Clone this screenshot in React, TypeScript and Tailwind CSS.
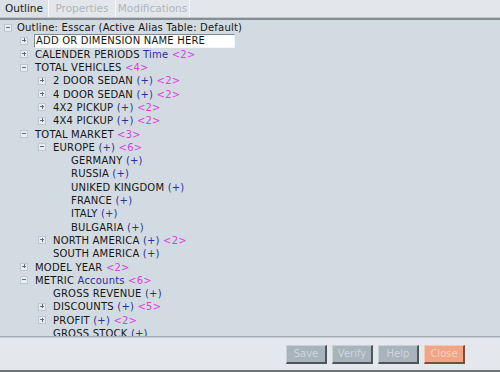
import React from "react";

type Row = {
  level: number;
  exp?: "+" | "-";
  label: string;
  blue?: string;
  count?: string;
  input?: boolean;
};

const rows: Row[] = [
  { level: 0, exp: "-", label: "Outline: Esscar (Active Alias Table: Default)" },
  { level: 1, exp: "+", label: "ADD OR DIMENSION NAME HERE", input: true },
  { level: 1, exp: "+", label: "CALENDER PERIODS", blue: "Time", count: "<2>" },
  { level: 1, exp: "-", label: "TOTAL VEHICLES", count: "<4>" },
  { level: 2, exp: "+", label: "2 DOOR SEDAN", blue: "(+)", count: "<2>" },
  { level: 2, exp: "+", label: "4 DOOR SEDAN", blue: "(+)", count: "<2>" },
  { level: 2, exp: "+", label: "4X2 PICKUP", blue: "(+)", count: "<2>" },
  { level: 2, exp: "+", label: "4X4 PICKUP", blue: "(+)", count: "<2>" },
  { level: 1, exp: "-", label: "TOTAL MARKET", count: "<3>" },
  { level: 2, exp: "-", label: "EUROPE", blue: "(+)", count: "<6>" },
  { level: 3, label: "GERMANY", blue: "(+)" },
  { level: 3, label: "RUSSIA", blue: "(+)" },
  { level: 3, label: "UNIKED KINGDOM", blue: "(+)" },
  { level: 3, label: "FRANCE", blue: "(+)" },
  { level: 3, label: "ITALY", blue: "(+)" },
  { level: 3, label: "BULGARIA", blue: "(+)" },
  { level: 2, exp: "+", label: "NORTH AMERICA", blue: "(+)", count: "<2>" },
  { level: 2, label: "SOUTH AMERICA", blue: "(+)" },
  { level: 1, exp: "+", label: "MODEL YEAR", count: "<2>" },
  { level: 1, exp: "-", label: "METRIC", blue: "Accounts", count: "<6>" },
  { level: 2, label: "GROSS REVENUE", blue: "(+)" },
  { level: 2, exp: "+", label: "DISCOUNTS", blue: "(+)", count: "<5>" },
  { level: 2, exp: "+", label: "PROFIT", blue: "(+)", count: "<2>" },
  { level: 2, label: "GROSS STOCK", blue: "(+)" },
];

// box x / text x per level: (4,17) (20,35) (38,53) (56,71)
const indent = ["pl-[4px]", "pl-[20px]", "pl-[38px]", "pl-[56px]"];

function Expander({ sign }: { sign: "+" | "-" }) {
  return (
    <span className="flex h-[8px] w-[8px] items-center justify-center border border-[#c0c7ce] bg-[#e9edf1]">
      <span className="relative h-[6px] w-[6px]">
        <span className="absolute left-[1px] top-[2px] h-[1px] w-[4px] bg-[#656b72]" />
        {sign === "+" && <span className="absolute left-[2.5px] top-[0.5px] h-[4px] w-[1px] bg-[#656b72]" />}
      </span>
    </span>
  );
}

function TreeRow({ row }: { row: Row }) {
  return (
    <div className={`flex h-[13.3px] items-center ${indent[row.level]}`}>
      <span className={`flex shrink-0 items-center ${row.level === 0 ? "w-[13px]" : "w-[15px]"}`}>
        {row.exp && <Expander sign={row.exp} />}
      </span>
      {row.input ? (
        <span className="-ml-[1px] flex h-[14px] w-[201px] items-center border-t border-l border-t-[#7f8790] border-l-[#7f8790] border-b border-r border-b-[#f4f6f8] border-r-[#f4f6f8] bg-white pl-[1px]">
          {row.label}
        </span>
      ) : (
        <span className="whitespace-nowrap">
          {row.label}
          {row.blue && <span className="text-[#2b2ea3]"> {row.blue}</span>}
          {row.count && <span className="text-[#dc3fdc]"> {row.count}</span>}
        </span>
      )}
    </div>
  );
}

function Btn({ label, orange }: { label: string; orange?: boolean }) {
  return (
    <div
      className={`flex h-[19px] w-[41px] items-center justify-center border-t border-l border-b-2 border-r-2 text-[10px] ${
        orange
          ? "border-t-[#f7c8b2] border-l-[#f7c8b2] border-b-[#7a4e3c] border-r-[#7a4e3c] bg-[#f0a586] text-[#f7d0bf]"
          : "border-t-[#c9d1d7] border-l-[#c9d1d7] border-b-[#4c545c] border-r-[#4c545c] bg-[#a8b3bb] text-[#cfd6db]"
      }`}
    >
      {label}
    </div>
  );
}

export default function App() {
  return (
    <div className="flex h-[372px] w-[500px] flex-col overflow-hidden bg-[#d3dbe2] text-[10px] tracking-[0.2px] text-[#161616] [font-family:'DejaVu_Sans',Verdana,sans-serif]">
      <div className="flex h-[17px] shrink-0 items-end bg-[#e3e7eb] text-[10.5px] tracking-normal">
        <div className="flex h-[17px] w-[49px] items-center justify-center border-r border-[#f5f7f9] bg-[#dbe1e6] text-[#202020]">Outline</div>
        <div className="flex h-[17px] w-[67px] items-center justify-center border-r border-[#f5f7f9] text-[#aeb6bd]">Properties</div>
        <div className="flex h-[17px] w-[74px] items-center justify-center border-r border-[#f5f7f9] text-[#aeb6bd]">Modifications</div>
      </div>
      <div className="h-[1px] shrink-0 bg-[#c4c8cc]" />
      <div className="h-[2px] shrink-0 bg-[#868e95]" />
      <div className="flex-1 overflow-hidden pt-[1px]">
        {rows.map((r, i) => (
          <TreeRow key={i} row={r} />
        ))}
      </div>
      <div className="h-[1px] shrink-0 bg-[#a3aab0]" />
      <div className="h-[1px] shrink-0 bg-[#c8cdd2]" />
      <div className="flex h-[32px] shrink-0 items-center justify-end gap-[5px] bg-[#e4e8ec] pr-[35px] tracking-normal">
        <Btn label="Save" />
        <Btn label="Verify" />
        <Btn label="Help" />
        <Btn label="Close" orange />
      </div>
      <div className="h-[2px] shrink-0 bg-[#6c747c]" />
    </div>
  );
}
